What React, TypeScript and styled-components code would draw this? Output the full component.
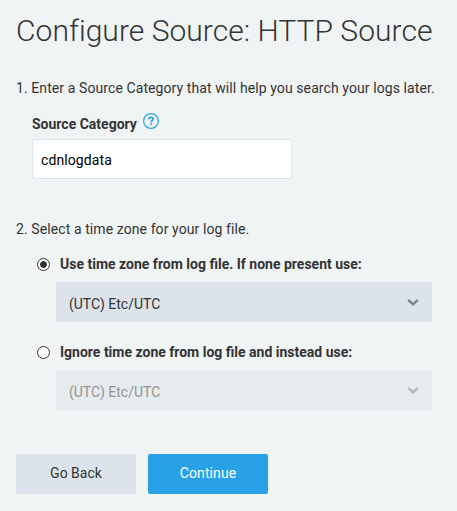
import React, { useState } from "react";
import styled, { createGlobalStyle } from "styled-components";

const GlobalStyle = createGlobalStyle`
  * { box-sizing: border-box; }
  body {
    margin: 0;
    background: #f0f4f5;
    color: #333;
    font-family: Roboto, "Liberation Sans", sans-serif;
    font-size: 14px;
    line-height: 20px;
  }
`;

const Page = styled.main`
  display: flex;
  flex-direction: column;
  width: 457px;
  height: 511px;
  padding: 10px 16px 0;
  overflow: hidden;
  background: #f0f4f5;
`;

const Title = styled.h1`
  margin: 0;
  height: 68px;
  font-size: 30px;
  font-weight: 300;
  letter-spacing: 0.04px;
  line-height: 42px;
  white-space: nowrap;
`;

const Step = styled.p`
  margin: 0;
  letter-spacing: 0.09px;
  white-space: nowrap;
`;

const Field = styled.div`
  display: flex;
  flex-direction: column;
  width: 260px;
  margin: 12px 0 40px 16px;
`;

const FieldHeader = styled.div`
  display: flex;
  height: 29px;
  gap: 6px;
`;

const Label = styled.label`
  padding-top: 4px;
  font-weight: 700;
  white-space: nowrap;
`;

const HelpIcon = styled.svg`
  width: 16px;
  height: 16px;
  margin-top: 3px;
  fill: none;
  stroke: #29a1e7;
`;

const TextInput = styled.input`
  width: 260px;
  height: 40px;
  padding: 2px 8px 0;
  border: 1px solid #dce3ea;
  border-radius: 2px;
  outline: none;
  background: #fff;
  color: #000;
  font: inherit;
  letter-spacing: 0.1px;
`;

const Options = styled.div`
  display: flex;
  flex-direction: column;
  gap: 20px;
  margin: 15px 0 44px 21px;
`;

const Option = styled.div`
  display: flex;
  flex-direction: column;
  gap: 8px;
`;

const RadioLabel = styled.label`
  display: flex;
  align-items: center;
  height: 20px;
  gap: 10px;
  font-weight: 700;
  white-space: nowrap;
`;

const Radio = styled.input`
  appearance: none;
  flex: none;
  width: 13px;
  height: 13px;
  margin: 0;
  border: 1px solid #333;
  border-radius: 50%;
  background: #fff;

  &:checked {
    background: radial-gradient(circle, #333 3px, #fff 3.8px);
  }
`;

const Select = styled.button<{ $muted: boolean }>`
  display: flex;
  align-items: center;
  justify-content: space-between;
  width: 376px;
  height: 40px;
  margin-left: 19px;
  padding: 0 13px;
  border: 0;
  border-radius: 2px;
  background: ${(p) => (p.$muted ? "#e6ebed" : "#dce3ea")};
  color: ${(p) => (p.$muted ? "#929495" : "#333")};
  font: inherit;

  span { padding-top: 4px; }
  svg { stroke: ${(p) => (p.$muted ? "#b5babf" : "#7c8490")}; }
`;

const Chevron = styled.svg`
  width: 12px;
  height: 8px;
  fill: none;
`;

const Actions = styled.div`
  display: flex;
  gap: 12px;
`;

const Button = styled.button<{ $primary?: boolean }>`
  width: 120px;
  height: 40px;
  padding: 0 0 2px;
  border: 0;
  border-radius: 2px;
  background: ${(p) => (p.$primary ? "#29a1e7" : "#dce3ea")};
  color: ${(p) => (p.$primary ? "#fff" : "#333")};
  font: inherit;
  letter-spacing: ${(p) => (p.$primary ? "0.1px" : "0")};
`;

const zoneOptions = [
  "Use time zone from log file. If none present use:",
  "Ignore time zone from log file and instead use:",
];

export default function App() {
  const [selected, setSelected] = useState(0);
  const [category, setCategory] = useState("cdnlogdata");

  return (
    <Page>
      <GlobalStyle />
      <Title>Configure Source: HTTP Source</Title>
      <Step>1. Enter a Source Category that will help you search your logs later.</Step>
      <Field>
        <FieldHeader>
          <Label htmlFor="category">Source Category</Label>
          <HelpIcon viewBox="0 0 16 16" aria-label="Help">
            <circle cx="8" cy="8" r="7.4" strokeWidth="1.2" />
            <path d="M5.9 6.3C5.9 4.9 6.8 4.3 8 4.3s2.1.7 2.1 1.8C10.1 7.5 8.1 7.6 8.1 9.2" strokeWidth="1.8" />
            <path d="M8.1 10.2v1.6" strokeWidth="1.9" />
          </HelpIcon>
        </FieldHeader>
        <TextInput id="category" value={category} onChange={(e) => setCategory(e.target.value)} />
      </Field>
      <Step>2. Select a time zone for your log file.</Step>
      <Options>
        {zoneOptions.map((label, i) => (
          <Option key={label}>
            <RadioLabel>
              <Radio type="radio" name="zone" checked={selected === i} onChange={() => setSelected(i)} />
              {label}
            </RadioLabel>
            <Select type="button" $muted={selected !== i} disabled={selected !== i}>
              <span>(UTC) Etc/UTC</span>
              <Chevron viewBox="0 0 12 8">
                <path d="M1.2 1.8 6 6.3l4.8-4.5" strokeWidth="2.5" />
              </Chevron>
            </Select>
          </Option>
        ))}
      </Options>
      <Actions>
        <Button type="button">Go Back</Button>
        <Button type="button" $primary>Continue</Button>
      </Actions>
    </Page>
  );
}
